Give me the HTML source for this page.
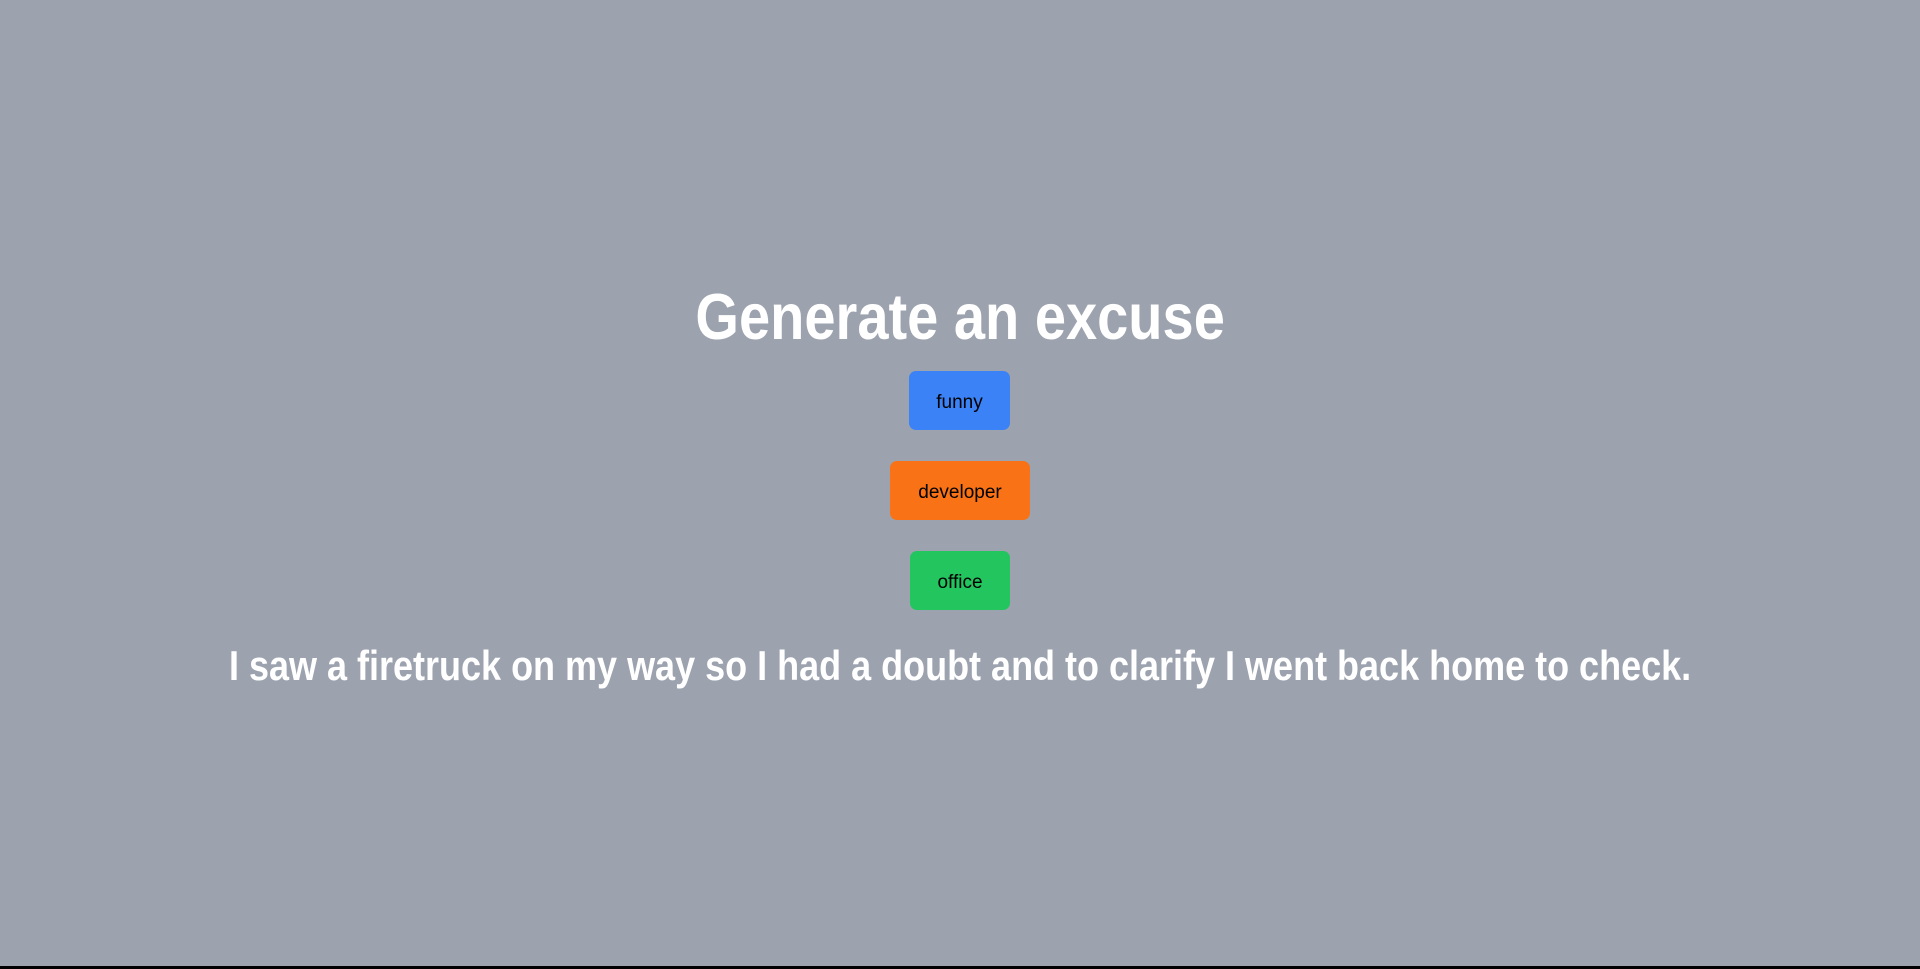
<!DOCTYPE html>
<html><head><meta charset="utf-8"><style>
html,body{margin:0;padding:0;width:1920px;height:969px;overflow:hidden;background:#9ca3af;font-family:"Liberation Sans",sans-serif}
.c{position:absolute;left:0;width:1920px;text-align:center;white-space:nowrap}
.t{display:inline-block;color:#fff;font-weight:bold}
.b{position:absolute;border-radius:7px;color:#000;font-size:19px;display:flex;align-items:center;justify-content:center;box-sizing:border-box;padding-top:4px}
.line{position:absolute;left:0;bottom:0;width:1920px;height:3px;background:#000}
</style></head><body>
<div class="c" style="top:279px"><span class="t" style="font-size:65px;line-height:75px;transform:scaleX(0.862)">Generate an excuse</span></div>
<div class="b" style="left:909px;top:371px;width:101px;height:59px;background:#3b82f6">funny</div>
<div class="b" style="left:890px;top:461px;width:140px;height:59px;background:#f97316">developer</div>
<div class="b" style="left:910px;top:551px;width:100px;height:59px;background:#22c55e">office</div>
<div class="c" style="top:641px"><span class="t" style="font-size:42px;line-height:50px;transform:scaleX(0.857)">I saw a firetruck on my way so I had a doubt and to clarify I went back home to check.</span></div>
<div class="line"></div>
</body></html>
